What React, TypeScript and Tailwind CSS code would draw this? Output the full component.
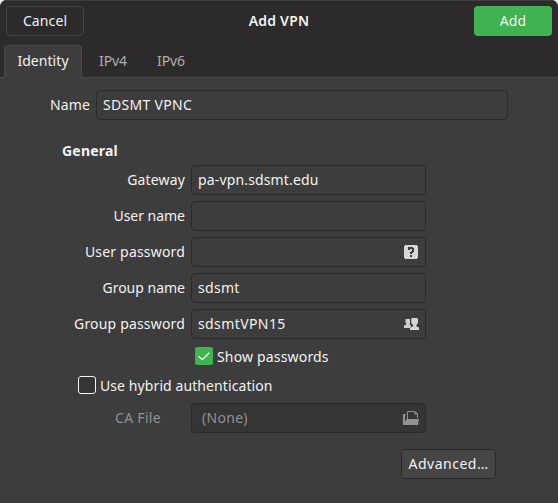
import type { ReactNode } from "react";

function Entry({ children, icon, className = "" }: { children?: ReactNode; icon?: ReactNode; className?: string }) {
  return (
    <div className={`flex h-[30px] shrink-0 items-center justify-between rounded-[4px] border border-[#2a2a2a] pl-[6px] pr-[6px] ${className}`}>
      <span>{children}</span>
      {icon}
    </div>
  );
}

function Row({ label, tracking, children }: { label: string; tracking: string; children: ReactNode }) {
  return (
    <div className="flex h-[30px] items-center gap-[6px]">
      <span className={`w-[185px] text-right ${tracking}`}>{label}</span>
      {children}
    </div>
  );
}

function QuestionIcon() {
  return (
    <svg width="14" height="14" viewBox="0 0 14 14" shapeRendering="crispEdges" className="mr-px shrink-0">
      <path fill="#d6d6d6" d="M1 0h12v1h1v12h-1v1H1v-1H0V1h1z" />
      <path fill="#3d3d3d" d="M4 2h5v1h1v4H9v1H8v1H6V7h1V6h1V4H6v1H4zM6 10h2v2H6z" />
    </svg>
  );
}

function UsersIcon() {
  return (
    <svg width="15" height="12" viewBox="0 0 15 12" className="shrink-0">
      <path fill="#cfcfcf" d="M1.500 1H6v4.500L5.500 6.500 7.200 7.500 6 10H0V7.500L2.300 6.500V5.500L1.500 4.500z" />
      <path fill="#d6d6d6" d="M8 0h5l1 1v4l-1.500 2v1.500L15 9.500V12H6V9.500L9 8.500V7L7.200 5V1z" />
      <path fill="none" stroke="#3d3d3d" strokeWidth=".8" d="M6.600 1v4.500L8.200 7.800" />
    </svg>
  );
}

function FolderIcon() {
  return (
    <svg width="16" height="14" viewBox="0 0 16 14" className="shrink-0">
      <path fill="#929292" d="M0 3h3v1H2v7l1.500-3H16l-1 6H0z" />
      <path fill="none" stroke="#929292" d="M4.500 8V.5H12L14.500 3v4" />
      <path fill="#929292" d="M11.500 0 15 3.500h-3.500z" />
    </svg>
  );
}

export default function App() {
  return (
    <div className="h-[503px] w-[558px] overflow-hidden bg-[#e8e8e8] font-['Noto_Sans',sans-serif] text-[14px] leading-[20px] whitespace-nowrap text-[#f2f2f2]">
      <div className="flex h-full flex-col overflow-hidden rounded-t-[7px] bg-[#3d3d3d]">
        <header className="h-[78px] shrink-0 border-t border-b border-t-[#403f3f] border-b-[#4a4a4a] bg-[#2c2a2a]">
          <div className="grid grid-cols-[78px_1fr_78px] items-center px-[6px] pt-[5px] text-center">
            <button className="h-[30px] rounded-[4px] border border-[#454343] tracking-[0.1px]">Cancel</button>
            <h1 className="font-semibold tracking-[0.2px]">Add VPN</h1>
            <button className="h-[30px] rounded-[4px] bg-[#3eb34f] tracking-[0.15px]">Add</button>
          </div>
          <nav className="mt-[9px] flex h-[33px] pl-[4px] text-[#b0afaf]">
            <div className="h-[33px] w-[78px] rounded-t-[4px] border border-b-0 border-[#4a4a4a] bg-[#3d3d3d] pt-[5px] text-center tracking-[0.05px] text-[#f2f2f2]">Identity</div>
            <div className="w-[58px] pl-[17px] pt-[6px] tracking-[-0.1px]">IPv4</div>
            <div className="pl-[17px] pt-[6px] tracking-[-0.1px]">IPv6</div>
          </nav>
        </header>
        <main className="flex flex-col pt-[12px]">
          <div className="flex items-center gap-[6px] pl-[50px]">
            <span className="w-[40px] tracking-[0.1px]">Name</span>
            <Entry className="w-[412px] tracking-[0.3px]">SDSMT VPNC</Entry>
          </div>
          <h2 className="mt-[21px] h-[20px] pl-[62px] font-bold tracking-[0.2px]">General</h2>
          <div className="mt-[4px] flex flex-col gap-[6px]">
            <Row label="Gateway" tracking="tracking-[0.15px]"><Entry className="w-[235px] tracking-[0.15px]">pa-vpn.sdsmt.edu</Entry></Row>
            <Row label="User name" tracking="tracking-[-0.02px]"><Entry className="w-[235px]" /></Row>
            <Row label="User password" tracking="tracking-[0.18px]"><Entry className="w-[235px]" icon={<QuestionIcon />} /></Row>
            <Row label="Group name" tracking=""><Entry className="w-[235px] tracking-[0.3px]">sdsmt</Entry></Row>
            <Row label="Group password" tracking="tracking-[0.17px]"><Entry className="w-[235px] tracking-[0.4px]" icon={<UsersIcon />}>sdsmtVPN15</Entry></Row>
          </div>
          <label className="mt-[8px] flex h-[18px] items-center gap-[4px] pl-[195px] tracking-[0.17px]">
            <span className="flex size-[18px] items-center justify-center rounded-[2px] bg-[#3eb34f]">
              <svg width="12" height="9" viewBox="0 0 12 9"><path d="m.7 4.200 3.600 3.500L11.300.7" fill="none" stroke="#fff" strokeWidth="1.300" /></svg>
            </span>
            <span className="pt-px">Show passwords</span>
          </label>
          <label className="mt-[11px] flex h-[18px] items-center gap-[4px] pl-[78px] tracking-[0.09px]">
            <span className="size-[18px] rounded-[3px] border border-[#f5f5f5] bg-[#353535]" />
            <span className="pt-[2px]">Use hybrid authentication</span>
          </label>
          <div className="mt-[9px] flex items-center text-[#929292]">
            <span className="ml-[115px] w-[76px] tracking-[0.3px]">CA File</span>
            <Entry className="w-[235px] bg-[#353535] tracking-[0.3px]" icon={<FolderIcon />}><span className="ml-[4px]">(None)</span></Entry>
          </div>
          <button className="mt-[16px] ml-[401px] h-[30px] w-[95px] rounded-[4px] border border-[#2a2a2a] bg-[#454545] tracking-[0.5px]">Advanced…</button>
        </main>
      </div>
    </div>
  );
}
